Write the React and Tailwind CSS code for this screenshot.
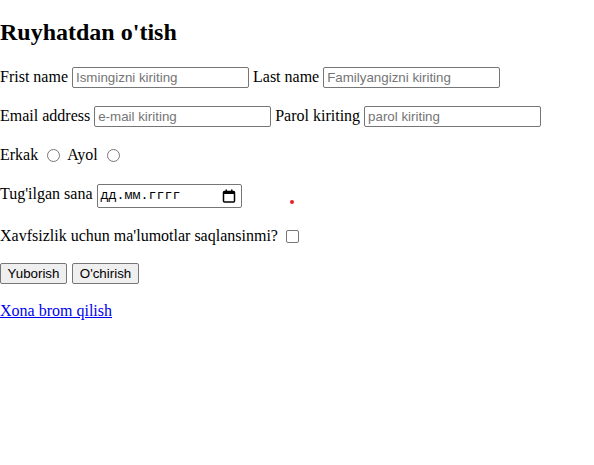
import React from "react";

const serif = "font-['Liberation_Serif','Times_New_Roman',serif]";
const sans = "font-['Liberation_Sans',Arial,sans-serif]";

function TextInput({ placeholder, type = "text" }) {
  return (
    <input
      type={type}
      placeholder={placeholder}
      className={`${sans} text-[13.33px] leading-[15px] h-[21px] w-[177px] px-[3px] py-[2px] border border-[#767676] rounded-[2px] bg-white text-black placeholder:text-[#757575] outline-none`}
    />
  );
}

function Radio() {
  return (
    <span className="inline-block w-[13px] h-[13px] rounded-full border border-[#767676] bg-white shrink-0" />
  );
}

function CalendarIcon() {
  return (
    <svg width="14" height="14" viewBox="0 0 14 14" className="block">
      <rect x="1.5" y="2.5" width="11" height="10.5" rx="1" fill="none" stroke="#000" strokeWidth="1.5" />
      <rect x="1.5" y="2.5" width="11" height="2.5" fill="#000" />
      <rect x="3.5" y="0.5" width="1.5" height="2.5" fill="#000" />
      <rect x="9" y="0.5" width="1.5" height="2.5" fill="#000" />
    </svg>
  );
}

export default function App() {
  return (
    <div className={`relative w-[594px] h-[465px] bg-white text-black ${serif} text-[16px]`}>
      <h1 className="text-[24px] font-bold leading-[27px] pt-[19px]">Ruyhatdan o'tish</h1>

      <div className="flex items-baseline gap-[4px] mt-[21px] leading-[18px]">
        <span>Frist name</span>
        <TextInput placeholder="Ismingizni kiriting" />
        <span>Last name</span>
        <TextInput placeholder="Familyangizni kiriting" />
      </div>

      <div className="flex items-baseline gap-[4px] mt-[18px] leading-[18px]">
        <span>Email address</span>
        <TextInput placeholder="e-mail kiriting" type="email" />
        <span>Parol kiriting</span>
        <TextInput placeholder="parol kiriting" type="password" />
      </div>

      <div className="flex items-center mt-[18px] leading-[18px] h-[20px]">
        <span>Erkak</span>
        <span className="ml-[9px] mr-[7px] flex"><Radio /></span>
        <span>Ayol</span>
        <span className="ml-[9px] flex"><Radio /></span>
      </div>

      <div className="flex items-baseline gap-[4px] mt-[19px] leading-[18px]">
        <span>Tug'ilgan sana</span>
        <div className="inline-flex items-center justify-between h-[24px] w-[145px] border border-[#767676] rounded-[2px] pl-[3px] pr-[5px] bg-white">
          <span className="font-['Liberation_Mono','Courier_New',monospace] text-[13.33px] leading-[16px]">дд.мм.гггг</span>
          <CalendarIcon />
        </div>
      </div>

      <div className="flex items-center mt-[18px] leading-[18px] h-[20px]">
        <span>Xavfsizlik uchun ma'lumotlar saqlansinmi?</span>
        <span className="ml-[8px] inline-block w-[13px] h-[13px] rounded-[2px] border border-[#767676] bg-white" />
      </div>

      <div className="flex items-center gap-[5px] mt-[17px]">
        <button className={`${sans} text-[13.33px] leading-[15px] h-[21px] w-[67px] border border-[#767676] rounded-[2px] bg-[#efefef]`}>Yuborish</button>
        <button className={`${sans} text-[13.33px] leading-[15px] h-[21px] w-[67px] border border-[#767676] rounded-[2px] bg-[#efefef]`}>O'chirish</button>
      </div>

      <div className="mt-[18px] leading-[18px]">
        <a href="#" className="text-[#0000ee] underline">Xona brom qilish</a>
      </div>

      <span className="absolute left-[290px] top-[200px] w-[4px] h-[4px] rounded-full bg-[#e8202a]" />
    </div>
  );
}
